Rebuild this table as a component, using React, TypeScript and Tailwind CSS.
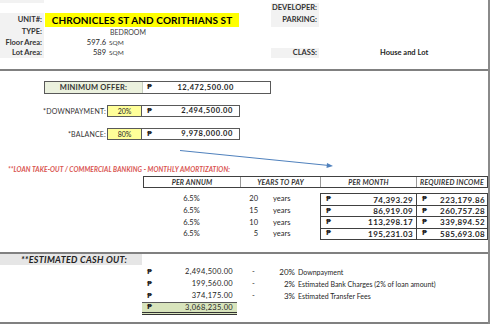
const rows = [
  { rate: '6.5%', years: '20', month: '74,393.29', income: '223,179.86' },
  { rate: '6.5%', years: '15', month: '86,919.09', income: '260,757.28' },
  { rate: '6.5%', years: '10', month: '113,298.17', income: '339,894.52' },
  { rate: '6.5%', years: '5', month: '195,231.03', income: '585,693.08' },
];

const cashOut = [
  { amount: '2,494,500.00', pct: '20%', label: 'Downpayment' },
  { amount: '199,560.00', pct: '2%', label: 'Estimated Bank Charges (2% of loan amount)' },
  { amount: '374,175.00', pct: '3%', label: 'Estimated Transfer Fees' },
];

function Peso() {
  return <span className="font-['DejaVu_Sans',sans-serif] font-bold text-[7px] text-[#222]">{'\u20B1'}</span>;
}

function Label({ children, className = '' }: { children: React.ReactNode; className?: string }) {
  return (
    <div className={`flex items-center justify-end pr-[2px] font-bold text-[7.5px] text-[#333] ${className}`}>
      {children}
    </div>
  );
}

export default function App() {
  return (
    <div className="relative w-[490px] h-[325px] overflow-hidden bg-white font-['Lato',sans-serif] text-[#262626]">
      <div className="w-[490px] border-r-2 border-[#8a8a8a] flex flex-col">
        {/* property details */}
        <div className="h-[69px] flex flex-col">
          <div className="h-[3px] w-[44px] bg-[#f2f2f2]" />
          <div className="h-[10px] flex">
            <div className="w-[271px]" />
            <Label className="w-[48px] bg-[#f2f2f2]">DEVELOPER:</Label>
          </div>
          <div className="h-[14px] flex">
            <Label className="w-[44px] bg-[#f2f2f2]">UNIT#:</Label>
            <div className="ml-[1px] w-[194px] bg-[#ffff00] flex items-center justify-center font-bold text-[10px] tracking-[0.1px] text-black">
              CHRONICLES ST AND CORITHIANS ST
            </div>
            <div className="w-[32px]" />
            <Label className="w-[48px] bg-[#f2f2f2]">PARKING:</Label>
          </div>
          <div className="h-[10px] flex text-[7px]">
            <Label className="w-[44px] bg-[#f2f2f2]">TYPE:</Label>
            <div className="pl-[66px] flex items-center text-[#404040]">BEDROOM</div>
          </div>
          <div className="h-[11px] flex text-[7.5px]">
            <Label className="w-[44px] bg-[#f2f2f2]">Floor Area:</Label>
            <div className="w-[62px] flex items-center justify-end">597.6</div>
            <div className="pl-[3px] flex items-center text-[6.5px] text-[#404040]">SQM</div>
          </div>
          <div className="h-[10px] flex text-[7.5px]">
            <Label className="w-[44px] bg-[#f2f2f2]">Lot Area:</Label>
            <div className="w-[62px] flex items-center justify-end">589</div>
            <div className="w-[165px] pl-[3px] flex items-center text-[6.5px] text-[#404040]">SQM</div>
            <Label className="w-[48px] bg-[#f2f2f2]">CLASS:</Label>
            <div className="pl-[61px] flex items-center font-bold text-[7.5px]">House and Lot</div>
          </div>
        </div>
        <div className="h-[2px] bg-[#808080]" />

        {/* offer */}
        <div className="h-[181px] flex flex-col">
          <div className="mt-[10px] ml-[44px] w-[227px] h-[13px] border border-[#595959] flex text-[7.5px]">
            <div className="w-[98px] bg-[#ebf1de] border-r border-[#c8cfc0] flex items-center justify-center font-bold text-[#333] tracking-[0.2px]">
              MINIMUM OFFER:
            </div>
            <div className="flex-1 flex items-center justify-between pl-[4px] pr-[36px] font-bold">
              <Peso />
              <span className="tracking-[0.6px]">12,472,500.00</span>
            </div>
          </div>

          {[
            { label: '*DOWNPAYMENT:', pct: '20%', value: '2,494,500.00' },
            { label: '*BALANCE:', pct: '80%', value: '9,978,000.00' },
          ].map((r) => (
            <div key={r.label} className="mt-[11px] h-[12px] flex text-[7.5px]">
              <div className="w-[107px] flex items-center justify-end pr-[1px] text-[7px] tracking-[0.2px] text-[#333]">{r.label}</div>
              <div className="w-[35px] bg-[#ffff99] border border-[#595959] flex items-center justify-center text-[7px]">
                {r.pct}
              </div>
              <div className="w-[98px] border border-l-0 border-[#595959] flex items-center justify-between pl-[5px] pr-[6px] font-bold">
                <Peso />
                <span className="tracking-[0.6px]">{r.value}</span>
              </div>
            </div>
          ))}

          <div className="mt-[27px] pl-[8px] h-[6px] flex items-center font-bold italic text-[6.6px] tracking-[0.1px] text-[#d9534f] whitespace-nowrap">
            **LOAN TAKE-OUT / COMMERCIAL BANKING - MONTHLY AMORTIZATION:
          </div>

          <div className="mt-[3px] ml-[143px] w-[345px] h-[12px] border border-[#404040] flex font-bold italic text-[7px] tracking-[0.2px] text-[#333]">
            <div className="w-[97px] border-r border-[#999] flex items-center justify-center">PER ANNUM</div>
            <div className="w-[80px] border-r border-[#999] flex items-center justify-center">YEARS TO PAY</div>
            <div className="w-[96px] border-r border-[#999] flex items-center justify-center">PER MONTH</div>
            <div className="flex-1 flex items-center justify-center">REQUIRED INCOME</div>
          </div>

          <div className="mt-[5px] ml-[143px] flex">
            <div className="w-[177px] flex flex-col text-[7.5px]">
              {rows.map((r) => (
                <div key={r.years} className="h-[11.7px] flex items-center">
                  <div className="w-[97px] text-center">{r.rate}</div>
                  <div className="w-[18px] text-right">{r.years}</div>
                  <div className="pl-[15px]">years</div>
                </div>
              ))}
            </div>
            <div className="w-[168px] border border-[#404040] flex flex-col font-bold text-[8px]">
              {rows.map((r, i) => (
                <div key={r.years} className={`h-[11.2px] flex ${i > 0 ? 'border-t border-[#404040]' : ''}`}>
                  <div className="w-[96px] border-r border-[#404040] flex items-center justify-between pl-[5px] pr-[3px]">
                    <Peso />
                    <span className="tracking-[0.4px]">{r.month}</span>
                  </div>
                  <div className="flex-1 flex items-center justify-between pl-[5px] pr-[2px]">
                    <Peso />
                    <span className="tracking-[0.4px]">{r.income}</span>
                  </div>
                </div>
              ))}
            </div>
          </div>
        </div>
        <div className="h-[2px] bg-[#808080]" />

        {/* cash out */}
        <div className="h-[68px] flex flex-col text-[7.5px]">
          <div className="h-[11px] w-[142px] bg-[#e6e6e6] flex items-center justify-center pl-[6px] font-bold italic text-[9px] tracking-[0.3px] text-[#222]">
            **ESTIMATED CASH OUT:
          </div>
          <div className="mt-[1px]" />
          {cashOut.map((c) => (
            <div key={c.label} className="h-[12px] flex items-center">
              <div className="w-[142px]" />
              <div className="w-[95px] flex items-center justify-between pl-[5px] pr-[4px]">
                <Peso />
                <span className="tracking-[0.3px]">{c.amount}</span>
              </div>
              <div className="w-[33px] text-center">-</div>
              <div className="w-[25px] text-right text-[8px]">{c.pct}</div>
              <div className="pl-[3px] text-[7px]">{c.label}</div>
            </div>
          ))}
          <div className="flex">
            <div className="w-[142px]" />
            <div className="w-[95px] h-[13px] bg-[#d8e4bc] border-t border-[#595959] border-b-[3px] border-double border-b-[#333] flex items-center justify-between pl-[5px] pr-[4px]">
              <Peso />
              <span className="tracking-[0.3px]">3,068,235.00</span>
            </div>
          </div>
        </div>
        <div className="h-[2px] bg-[#808080]" />
      </div>

      <svg className="absolute left-0 top-0 pointer-events-none" width="490" height="325">
        <line x1="180" y1="150.5" x2="329" y2="165.5" stroke="#4f81bd" strokeWidth="1" />
        <polygon points="333,166 327,163 326.5,168" fill="#4f81bd" />
      </svg>
    </div>
  );
}
